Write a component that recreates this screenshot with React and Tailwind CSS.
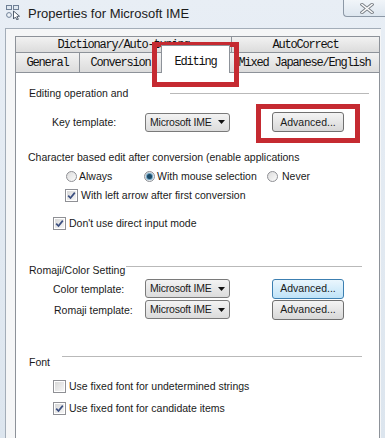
import React from 'react';

const ui = { fontFamily: '"Liberation Sans", Arial, sans-serif' };
const mono = { fontFamily: '"Liberation Mono", "Courier New", monospace' };

function Radio({ checked }) {
  return (
    <span className="flex h-[11px] w-[11px] shrink-0 items-center justify-center rounded-full border border-[#8f9095] bg-gradient-to-br from-[#dcdcdc] to-[#fbfbfb]">
      {checked && <span className="h-[5px] w-[5px] rounded-full bg-[#1d4a66] shadow-[0_0_1px_1px_#5e9bc0]" />}
    </span>
  );
}

function Check({ checked }) {
  return (
    <span className="flex h-[13px] w-[13px] shrink-0 items-center justify-center border border-[#8f9095] bg-white p-[1px]">
      <span className="flex h-full w-full items-center justify-center bg-gradient-to-br from-[#d8d8d8] to-[#f6f6f6]">
        {checked && (
          <svg width="9" height="9" viewBox="0 0 9 9">
            <path d="M1.2 4.6 L3.5 7 L7.8 1.6" fill="none" stroke="#3b4f80" strokeWidth="1.7" />
          </svg>
        )}
      </span>
    </span>
  );
}

function Combo() {
  return (
    <div className="flex h-[19px] w-[85px] shrink-0 items-center rounded-[3px] border border-[#7a7a7a] bg-gradient-to-b from-[#f3f3f3] to-[#dcdcdc] pl-[4px]">
      <span className="whitespace-nowrap text-[10.5px] tracking-[-0.2px] leading-[13px] text-[#1a1a1a]">Microsoft IME</span>
      <svg className="ml-[6px]" width="7" height="4" viewBox="0 0 7 4">
        <path d="M0 0 H7 L3.5 4 Z" fill="#111" />
      </svg>
    </div>
  );
}

function Button({ hot }) {
  return (
    <div
      className={
        'flex h-[20px] w-[72px] shrink-0 items-center justify-center rounded-[3px] border text-[10.5px] leading-[13px] text-[#1a1a1a] ' +
        (hot
          ? 'border-[#3c7fb1] bg-gradient-to-b from-[#eaf6fd] to-[#bfe3f8]'
          : 'border-[#707070] bg-gradient-to-b from-[#f4f4f4] to-[#d8d8d8]')
      }
    >
      Advanced...
    </div>
  );
}

function Tab({ label, className = '' }) {
  return (
    <div
      className={
        'flex items-center justify-center border-l border-t border-[#8d9299] bg-gradient-to-b from-[#f2f2f2] to-[#dcdcdc] text-[12px] tracking-[-1.2px] text-[#111] ' +
        className
      }
      style={mono}
    >
      {label}
    </div>
  );
}

export default function App() {
  return (
    <div className="relative h-[438px] w-[385px] overflow-hidden bg-gradient-to-b from-[#e8eef5] to-[#dce5ee]" style={ui}>
      {/* title bar */}
      <div className="flex h-[28px] items-start">
        <svg className="ml-[6px] mt-[5px]" width="15" height="15" viewBox="0 0 15 15">
          <rect x="0.5" y="0.5" width="5" height="4" fill="#dfe8f0" stroke="#6f8096" />
          <circle cx="3" cy="10" r="2.4" fill="#eef3f8" stroke="#6f8096" />
          <rect x="7.5" y="0.5" width="5" height="4" fill="#dfe8f0" stroke="#6f8096" />
          <path d="M7.5 6 L7.5 14 L9.5 12 L11 15 L12.3 14.3 L10.9 11.4 L13.5 11.2 Z" fill="#fff" stroke="#3f4d5e" strokeWidth="0.9" />
        </svg>
        <span className="ml-[7px] mt-[6px] text-[13px] leading-[16px] text-[#1b1b1b]">Properties for Microsoft IME</span>
        <div className="ml-auto mr-[-2px] flex h-[17px] w-[44px] items-center justify-center rounded-bl-[4px] border-b border-l border-[#8c98a6] bg-gradient-to-b from-[#f1f5f9] to-[#dde6ef]">
          <svg className="ml-[3px]" width="14" height="11" viewBox="0 0 14 11">
            <path d="M2 1.5 L12 9.5 M12 1.5 L2 9.5" stroke="#7d838a" strokeWidth="3.4" strokeLinecap="square" />
            <path d="M2 1.5 L12 9.5 M12 1.5 L2 9.5" stroke="#fdfdfd" strokeWidth="1.5" strokeLinecap="square" />
          </svg>
        </div>
      </div>

      {/* client area */}
      <div className="ml-[5px] mr-[4px] flex h-[424px] flex-col border-l border-t border-[#a3adb8] bg-[#f5f6f7] pl-[9px] pt-[7px]">
        {/* tab row 1 */}
        <div className="flex h-[16px] w-[365px]">
          <Tab label="Dictionary/Auto-tuning" className="w-[216px]" />
          <Tab label="AutoCorrect" className="flex-1 border-r" />
        </div>
        {/* tab row 2 */}
        <div className="flex h-[20px] w-[365px] items-start">
          <Tab label="General" className="h-[20px] w-[64px]" />
          <Tab label="Conversion" className="h-[20px] w-[82px]" />
          <div
            className="relative z-10 -mt-[7px] flex h-[28px] w-[69px] items-start justify-center border-x border-t border-[#8d9299] bg-white pt-[7px] text-[12px] tracking-[-1.2px] text-[#111]"
            style={mono}
          >
            Editing
          </div>
          <Tab label="Mixed Japanese/English" className="h-[20px] flex-1 border-l-0 border-r" />
        </div>

        {/* panel */}
        <div className="flex w-[365px] flex-1 flex-col border border-[#8d9299] bg-white text-[10.5px] leading-[14px] text-[#1a1a1a]">
          <div className="mt-[13px] flex h-[14px]">
            <span className="ml-[13px] w-[141px]">Editing operation and</span>
            <span className="mr-[10px] mt-[7px] h-px flex-1 bg-[#b9b9b9]" />
          </div>
          <div className="mt-[12px] flex h-[20px] items-center">
            <span className="ml-[36px] w-[93px]">Key template:</span>
            <Combo />
            <span className="ml-[42px]"><Button /></span>
          </div>
          <div className="mt-[18px] ml-[12px] h-[14px] whitespace-nowrap">Character based edit after conversion (enable applications</div>
          <div className="mt-[5px] flex h-[14px] items-center">
            <span className="ml-[50px] flex w-[78px] items-center gap-[2px]"><Radio />Always</span>
            <span className="flex w-[123px] items-center gap-[2px]"><Radio checked />With mouse selection</span>
            <span className="flex items-center gap-[4px]"><Radio />Never</span>
          </div>
          <div className="mt-[5px] ml-[49px] flex h-[14px] items-center gap-[3px]">
            <Check checked />
            With left arrow after first conversion
          </div>
          <div className="mt-[14px] ml-[37px] flex h-[14px] items-center gap-[3px]">
            <Check checked />
            Don't use direct input mode
          </div>

          <div className="mt-[33px] flex h-[14px]">
            <span className="ml-[13px]">Romaji/Color Setting</span>
            <span className="ml-[1px] mr-[17px] mt-[3px] h-px flex-1 bg-[#b9b9b9]" />
          </div>
          <div className="mt-[2px] flex h-[19px] items-center">
            <span className="ml-[37px] w-[92px]">Color template:</span>
            <Combo />
            <span className="ml-[42px]"><Button hot /></span>
          </div>
          <div className="mt-[2px] flex h-[19px] items-center">
            <span className="ml-[38px] w-[91px]">Romaji template:</span>
            <Combo />
            <span className="ml-[42px]"><Button /></span>
          </div>

          <div className="mt-[36px] flex h-[14px]">
            <span className="ml-[13px] w-[33px]">Font</span>
            <span className="mr-[17px] mt-[1px] h-px flex-1 bg-[#b9b9b9]" />
          </div>
          <div className="mt-[10px] ml-[37px] flex h-[14px] items-center gap-[3px]">
            <Check />
            Use fixed font for undetermined strings
          </div>
          <div className="mt-[8px] ml-[37px] flex h-[14px] items-center gap-[3px]">
            <Check checked />
            Use fixed font for candidate items
          </div>
        </div>
      </div>

      {/* red annotation boxes */}
      <div className="pointer-events-none absolute left-[152px] top-[42px] h-[45px] w-[87px] border-[5px] border-[#c52a31]" />
      <div className="pointer-events-none absolute left-[256px] top-[104px] h-[39px] w-[104px] border-[5px] border-[#c52a31]" />
    </div>
  );
}
